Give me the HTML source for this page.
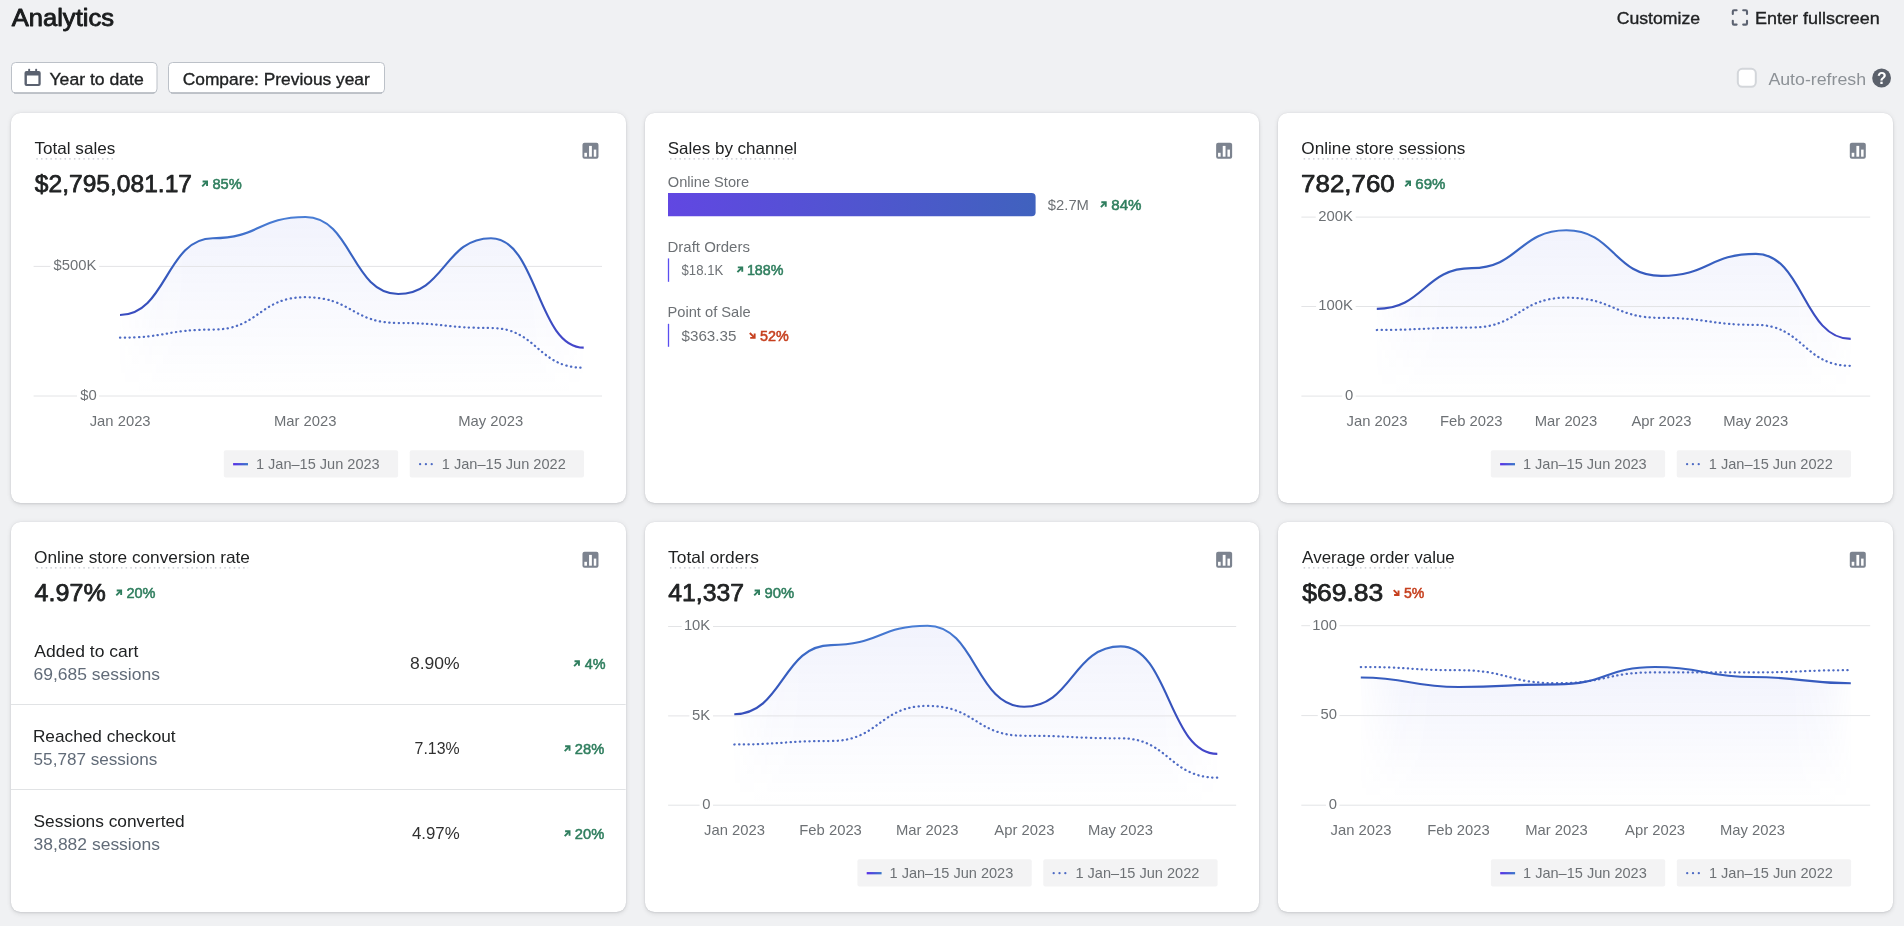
<!DOCTYPE html>
<html><head><meta charset="utf-8"><title>Analytics</title>
<style>
html,body{margin:0;padding:0;}
body{width:1904px;height:926px;overflow:hidden;background:#f0f1f3;position:relative;font-family:"Liberation Sans", sans-serif;}
.card{position:absolute;background:#fff;border-radius:9.5px;box-shadow:0 0 1px rgba(31,33,36,0.10),0 0 5px rgba(31,33,36,0.07),0 1px 2px rgba(31,33,36,0.08),0 3px 5px rgba(31,33,36,0.05);}
</style></head><body>
<div class="card" style="left:11px;top:113px;width:614.67px;height:390px"></div><div class="card" style="left:644.67px;top:113px;width:614.67px;height:390px"></div><div class="card" style="left:1278.33px;top:113px;width:614.67px;height:390px"></div><div class="card" style="left:11px;top:522px;width:614.67px;height:390px"></div><div class="card" style="left:644.67px;top:522px;width:614.67px;height:390px"></div><div class="card" style="left:1278.33px;top:522px;width:614.67px;height:390px"></div>
<svg width="1904" height="926" viewBox="0 0 1904 926" style="position:absolute;left:0;top:0;will-change:transform" font-family='"Liberation Sans", sans-serif'><defs><linearGradient id="fg1" x1="0" y1="212" x2="0" y2="396" gradientUnits="userSpaceOnUse"><stop offset="0" stop-color="#5566e0" stop-opacity="0.08"/><stop offset="0.5" stop-color="#5566e0" stop-opacity="0.04"/><stop offset="1" stop-color="#5566e0" stop-opacity="0.0"/></linearGradient><linearGradient id="mg1" x1="120.0" y1="0" x2="583.7" y2="0" gradientUnits="userSpaceOnUse"><stop offset="0" stop-color="#fff" stop-opacity="0.15"/><stop offset="0.08" stop-color="#fff" stop-opacity="0.85"/><stop offset="0.15" stop-color="#fff" stop-opacity="1"/><stop offset="0.88" stop-color="#fff" stop-opacity="1"/><stop offset="0.95" stop-color="#fff" stop-opacity="0.7"/><stop offset="1" stop-color="#fff" stop-opacity="0.15"/></linearGradient><mask id="m1" maskUnits="userSpaceOnUse" x="115.0" y="202" width="473.70000000000005" height="204"><rect x="115.0" y="202" width="473.70000000000005" height="204" fill="url(#mg1)"/></mask><linearGradient id="lg1" x1="0" y1="215" x2="0" y2="396" gradientUnits="userSpaceOnUse"><stop offset="0" stop-color="#4a7fd6"/><stop offset="0.2" stop-color="#3864c2"/><stop offset="0.45" stop-color="#3551ba"/><stop offset="0.72" stop-color="#4446ca"/><stop offset="1" stop-color="#4a3fd0"/></linearGradient><linearGradient id="lgl1" x1="232.79999999999998" y1="0" x2="247.79999999999998" y2="0" gradientUnits="userSpaceOnUse"><stop offset="0" stop-color="#5a2ee8"/><stop offset="1" stop-color="#3b78c9"/></linearGradient><linearGradient id="fg2" x1="0" y1="225.3" x2="0" y2="396.1" gradientUnits="userSpaceOnUse"><stop offset="0" stop-color="#5566e0" stop-opacity="0.08"/><stop offset="0.5" stop-color="#5566e0" stop-opacity="0.04"/><stop offset="1" stop-color="#5566e0" stop-opacity="0.0"/></linearGradient><linearGradient id="mg2" x1="1376.8" y1="0" x2="1850.6999999999998" y2="0" gradientUnits="userSpaceOnUse"><stop offset="0" stop-color="#fff" stop-opacity="0.15"/><stop offset="0.08" stop-color="#fff" stop-opacity="0.85"/><stop offset="0.15" stop-color="#fff" stop-opacity="1"/><stop offset="0.88" stop-color="#fff" stop-opacity="1"/><stop offset="0.95" stop-color="#fff" stop-opacity="0.7"/><stop offset="1" stop-color="#fff" stop-opacity="0.15"/></linearGradient><mask id="m2" maskUnits="userSpaceOnUse" x="1371.8" y="215.3" width="483.89999999999986" height="190.8"><rect x="1371.8" y="215.3" width="483.89999999999986" height="190.8" fill="url(#mg2)"/></mask><linearGradient id="lg2" x1="0" y1="215.1" x2="0" y2="396.1" gradientUnits="userSpaceOnUse"><stop offset="0" stop-color="#4a7fd6"/><stop offset="0.2" stop-color="#3864c2"/><stop offset="0.45" stop-color="#3551ba"/><stop offset="0.72" stop-color="#4446ca"/><stop offset="1" stop-color="#4a3fd0"/></linearGradient><linearGradient id="lgl2" x1="1499.7999999999997" y1="0" x2="1514.7999999999997" y2="0" gradientUnits="userSpaceOnUse"><stop offset="0" stop-color="#5a2ee8"/><stop offset="1" stop-color="#3b78c9"/></linearGradient><linearGradient id="fg3" x1="0" y1="620.7" x2="0" y2="805.2" gradientUnits="userSpaceOnUse"><stop offset="0" stop-color="#5566e0" stop-opacity="0.08"/><stop offset="0.5" stop-color="#5566e0" stop-opacity="0.04"/><stop offset="1" stop-color="#5566e0" stop-opacity="0.0"/></linearGradient><linearGradient id="mg3" x1="734.3" y1="0" x2="1217.3" y2="0" gradientUnits="userSpaceOnUse"><stop offset="0" stop-color="#fff" stop-opacity="0.15"/><stop offset="0.08" stop-color="#fff" stop-opacity="0.85"/><stop offset="0.15" stop-color="#fff" stop-opacity="1"/><stop offset="0.88" stop-color="#fff" stop-opacity="1"/><stop offset="0.95" stop-color="#fff" stop-opacity="0.7"/><stop offset="1" stop-color="#fff" stop-opacity="0.15"/></linearGradient><mask id="m3" maskUnits="userSpaceOnUse" x="729.3" y="610.7" width="493.0" height="204.5"><rect x="729.3" y="610.7" width="493.0" height="204.5" fill="url(#mg3)"/></mask><linearGradient id="lg3" x1="0" y1="623.7" x2="0" y2="805.2" gradientUnits="userSpaceOnUse"><stop offset="0" stop-color="#4a7fd6"/><stop offset="0.2" stop-color="#3864c2"/><stop offset="0.45" stop-color="#3551ba"/><stop offset="0.72" stop-color="#4446ca"/><stop offset="1" stop-color="#4a3fd0"/></linearGradient><linearGradient id="lgl3" x1="866.3999999999999" y1="0" x2="881.3999999999999" y2="0" gradientUnits="userSpaceOnUse"><stop offset="0" stop-color="#5a2ee8"/><stop offset="1" stop-color="#3b78c9"/></linearGradient><linearGradient id="fg4" x1="0" y1="662" x2="0" y2="805.2" gradientUnits="userSpaceOnUse"><stop offset="0" stop-color="#5566e0" stop-opacity="0.08"/><stop offset="0.5" stop-color="#5566e0" stop-opacity="0.04"/><stop offset="1" stop-color="#5566e0" stop-opacity="0.0"/></linearGradient><linearGradient id="mg4" x1="1360.8" y1="0" x2="1850.8" y2="0" gradientUnits="userSpaceOnUse"><stop offset="0" stop-color="#fff" stop-opacity="0.15"/><stop offset="0.08" stop-color="#fff" stop-opacity="0.85"/><stop offset="0.15" stop-color="#fff" stop-opacity="1"/><stop offset="0.88" stop-color="#fff" stop-opacity="1"/><stop offset="0.95" stop-color="#fff" stop-opacity="0.7"/><stop offset="1" stop-color="#fff" stop-opacity="0.15"/></linearGradient><mask id="m4" maskUnits="userSpaceOnUse" x="1355.8" y="652" width="500.0" height="163.20000000000005"><rect x="1355.8" y="652" width="500.0" height="163.20000000000005" fill="url(#mg4)"/></mask><linearGradient id="lg4" x1="0" y1="623.7" x2="0" y2="805.2" gradientUnits="userSpaceOnUse"><stop offset="0" stop-color="#4a7fd6"/><stop offset="0.2" stop-color="#3864c2"/><stop offset="0.45" stop-color="#3551ba"/><stop offset="0.72" stop-color="#4446ca"/><stop offset="1" stop-color="#4a3fd0"/></linearGradient><linearGradient id="lgl4" x1="1499.9" y1="0" x2="1514.9" y2="0" gradientUnits="userSpaceOnUse"><stop offset="0" stop-color="#5a2ee8"/><stop offset="1" stop-color="#3b78c9"/></linearGradient><linearGradient id="bar" x1="668" y1="0" x2="1036" y2="0" gradientUnits="userSpaceOnUse"><stop offset="0" stop-color="#6147e2"/><stop offset="1" stop-color="#4062be"/></linearGradient></defs>
<text x="11.80" y="25.70" font-size="23.0" fill="#1a1c1d" font-weight="400" textLength="102.13" lengthAdjust="spacingAndGlyphs" stroke="#1a1c1d" stroke-width="0.85" stroke-linejoin="round">Analytics</text>
<text x="1616.72" y="24.00" font-size="16.9" fill="#202223" font-weight="400" textLength="83.35" lengthAdjust="spacingAndGlyphs" stroke="#202223" stroke-width="0.35">Customize</text>
<g fill="none" stroke="#5b6270" stroke-width="2.1" stroke-linecap="round" stroke-linejoin="round"><path d="M1732.8,14 V11.4 Q1732.8,10.2 1734,10.2 H1736.6"/><path d="M1743.2,10.2 H1745.8 Q1747,10.2 1747,11.4 V14"/><path d="M1732.8,20.8 V23.4 Q1732.8,24.6 1734,24.6 H1736.6"/><path d="M1743.2,24.6 H1745.8 Q1747,24.6 1747,23.4 V20.8"/></g>
<text x="1755.06" y="24.00" font-size="16.9" fill="#202223" font-weight="400" textLength="124.76" lengthAdjust="spacingAndGlyphs" stroke="#202223" stroke-width="0.35">Enter fullscreen</text>
<rect x="11.5" y="62.5" width="145.5" height="30.5" rx="4" fill="#fff" stroke="#bcc1c8" stroke-width="1"/>
<path d="M14,93.0 H154.5" stroke="#a3a9b1" stroke-width="1"/>
<g fill="#5b6270"><path d="M26.5,71.1 H38.7 Q40.7,71.1 40.7,73.1 V84 Q40.7,86 38.7,86 H26.5 Q24.5,86 24.5,84 V73.1 Q24.5,71.1 26.5,71.1 Z M26.9,75.6 V83.9 H38.4 V75.6 Z" fill-rule="evenodd"/><rect x="28.2" y="68.8" width="1.9" height="3" rx="0.6"/><rect x="35.2" y="68.8" width="1.9" height="3" rx="0.6"/></g>
<text x="49.46" y="84.90" font-size="17.4" fill="#202223" font-weight="400" textLength="94.36" lengthAdjust="spacingAndGlyphs" stroke="#202223" stroke-width="0.35">Year to date</text>
<rect x="168.5" y="62.5" width="216" height="30.5" rx="4" fill="#fff" stroke="#bcc1c8" stroke-width="1"/>
<path d="M171,93.0 H382" stroke="#a3a9b1" stroke-width="1"/>
<text x="182.73" y="84.60" font-size="17.4" fill="#202223" font-weight="400" textLength="187.07" lengthAdjust="spacingAndGlyphs" stroke="#202223" stroke-width="0.35">Compare: Previous year</text>
<rect x="1737.8" y="68.8" width="18" height="18" rx="4.5" fill="#fff" stroke="#d3d6da" stroke-width="2"/>
<text x="1768.40" y="84.50" font-size="17.2" fill="#8c9196" font-weight="400" textLength="97.70" lengthAdjust="spacingAndGlyphs">Auto-refresh</text>
<circle cx="1881.6" cy="78" r="9.4" fill="#5b616b"/>
<text x="1881.8" y="83.8" font-size="15.8" font-weight="700" fill="#fff" text-anchor="middle">?</text>
<text x="34.46" y="154.20" font-size="16.5" fill="#202223" font-weight="400" textLength="80.84" lengthAdjust="spacingAndGlyphs">Total sales</text>
<path d="M36.3,158.9 H113.7" stroke="#c2c6ce" stroke-width="1.3" stroke-dasharray="1.5 3.2"/>
<g transform="translate(582.4699999999999,142.8)"><rect x="0" y="0" width="16" height="16" rx="2" fill="#7c838f"/><rect x="1.9" y="10" width="2.6" height="3.9" fill="#fff"/><rect x="6.6" y="3.1" width="2.8" height="10.8" fill="#fff"/><rect x="11.3" y="6.8" width="2.5" height="7.1" fill="#fff"/></g>
<text x="34.85" y="192.00" font-size="24.2" fill="#202223" font-weight="400" textLength="157.18" lengthAdjust="spacingAndGlyphs" stroke="#202223" stroke-width="0.75" stroke-linejoin="round">$2,795,081.17</text>
<g stroke="#2f7e5e" stroke-width="1.9" fill="none" stroke-linecap="butt" stroke-linejoin="miter"><path d="M202.2,186.3 L206.9,181.6"/><path d="M202.6,181.45 H207.05 V185.9"/></g>
<text x="212.44" y="188.80" font-size="14" fill="#2f7e5e" font-weight="400" textLength="29.29" lengthAdjust="spacingAndGlyphs" stroke="#2f7e5e" stroke-width="0.5">85%</text>
<text x="667.71" y="154.20" font-size="16.5" fill="#202223" font-weight="400" textLength="129.42" lengthAdjust="spacingAndGlyphs">Sales by channel</text>
<path d="M669.9699999999999,158.9 H795" stroke="#c2c6ce" stroke-width="1.3" stroke-dasharray="1.5 3.2"/>
<g transform="translate(1216.1399999999999,142.8)"><rect x="0" y="0" width="16" height="16" rx="2" fill="#7c838f"/><rect x="1.9" y="10" width="2.6" height="3.9" fill="#fff"/><rect x="6.6" y="3.1" width="2.8" height="10.8" fill="#fff"/><rect x="11.3" y="6.8" width="2.5" height="7.1" fill="#fff"/></g>
<text x="1301.36" y="154.20" font-size="16.5" fill="#202223" font-weight="400" textLength="164.05" lengthAdjust="spacingAndGlyphs">Online store sessions</text>
<path d="M1303.6299999999999,158.9 H1463.8" stroke="#c2c6ce" stroke-width="1.3" stroke-dasharray="1.5 3.2"/>
<g transform="translate(1849.8,142.8)"><rect x="0" y="0" width="16" height="16" rx="2" fill="#7c838f"/><rect x="1.9" y="10" width="2.6" height="3.9" fill="#fff"/><rect x="6.6" y="3.1" width="2.8" height="10.8" fill="#fff"/><rect x="11.3" y="6.8" width="2.5" height="7.1" fill="#fff"/></g>
<text x="1301.14" y="192.00" font-size="24.2" fill="#202223" font-weight="400" textLength="93.57" lengthAdjust="spacingAndGlyphs" stroke="#202223" stroke-width="0.75" stroke-linejoin="round">782,760</text>
<g stroke="#2f7e5e" stroke-width="1.9" fill="none" stroke-linecap="butt" stroke-linejoin="miter"><path d="M1405.1999999999998,186.3 L1409.9,181.6"/><path d="M1405.6,181.45 H1410.05 V185.9"/></g>
<text x="1415.35" y="188.80" font-size="14" fill="#2f7e5e" font-weight="400" textLength="30.10" lengthAdjust="spacingAndGlyphs" stroke="#2f7e5e" stroke-width="0.5">69%</text>
<text x="34.02" y="563.20" font-size="16.5" fill="#202223" font-weight="400" textLength="215.88" lengthAdjust="spacingAndGlyphs">Online store conversion rate</text>
<path d="M36.3,567.9 H248.1" stroke="#c2c6ce" stroke-width="1.3" stroke-dasharray="1.5 3.2"/>
<g transform="translate(582.4699999999999,551.8)"><rect x="0" y="0" width="16" height="16" rx="2" fill="#7c838f"/><rect x="1.9" y="10" width="2.6" height="3.9" fill="#fff"/><rect x="6.6" y="3.1" width="2.8" height="10.8" fill="#fff"/><rect x="11.3" y="6.8" width="2.5" height="7.1" fill="#fff"/></g>
<text x="34.60" y="601.00" font-size="24.2" fill="#202223" font-weight="400" textLength="71.19" lengthAdjust="spacingAndGlyphs" stroke="#202223" stroke-width="0.75" stroke-linejoin="round">4.97%</text>
<g stroke="#2f7e5e" stroke-width="1.9" fill="none" stroke-linecap="butt" stroke-linejoin="miter"><path d="M116.29999999999998,595.3 L121.0,590.6"/><path d="M116.69999999999999,590.45 H121.14999999999999 V594.9"/></g>
<text x="126.47" y="597.80" font-size="14" fill="#2f7e5e" font-weight="400" textLength="29.06" lengthAdjust="spacingAndGlyphs" stroke="#2f7e5e" stroke-width="0.5">20%</text>
<text x="668.12" y="563.20" font-size="16.5" fill="#202223" font-weight="400" textLength="90.78" lengthAdjust="spacingAndGlyphs">Total orders</text>
<path d="M669.9699999999999,567.9 H757.3" stroke="#c2c6ce" stroke-width="1.3" stroke-dasharray="1.5 3.2"/>
<g transform="translate(1216.1399999999999,551.8)"><rect x="0" y="0" width="16" height="16" rx="2" fill="#7c838f"/><rect x="1.9" y="10" width="2.6" height="3.9" fill="#fff"/><rect x="6.6" y="3.1" width="2.8" height="10.8" fill="#fff"/><rect x="11.3" y="6.8" width="2.5" height="7.1" fill="#fff"/></g>
<text x="668.27" y="601.00" font-size="24.2" fill="#202223" font-weight="400" textLength="75.73" lengthAdjust="spacingAndGlyphs" stroke="#202223" stroke-width="0.75" stroke-linejoin="round">41,337</text>
<g stroke="#2f7e5e" stroke-width="1.9" fill="none" stroke-linecap="butt" stroke-linejoin="miter"><path d="M754.2,595.3 L758.9,590.6"/><path d="M754.6,590.45 H759.05 V594.9"/></g>
<text x="764.43" y="597.80" font-size="14" fill="#2f7e5e" font-weight="400" textLength="29.71" lengthAdjust="spacingAndGlyphs" stroke="#2f7e5e" stroke-width="0.5">90%</text>
<text x="1302.13" y="563.20" font-size="16.5" fill="#202223" font-weight="400" textLength="152.68" lengthAdjust="spacingAndGlyphs">Average order value</text>
<path d="M1303.6299999999999,567.9 H1453" stroke="#c2c6ce" stroke-width="1.3" stroke-dasharray="1.5 3.2"/>
<g transform="translate(1849.8,551.8)"><rect x="0" y="0" width="16" height="16" rx="2" fill="#7c838f"/><rect x="1.9" y="10" width="2.6" height="3.9" fill="#fff"/><rect x="6.6" y="3.1" width="2.8" height="10.8" fill="#fff"/><rect x="11.3" y="6.8" width="2.5" height="7.1" fill="#fff"/></g>
<text x="1302.16" y="601.00" font-size="24.2" fill="#202223" font-weight="400" textLength="81.16" lengthAdjust="spacingAndGlyphs" stroke="#202223" stroke-width="0.75" stroke-linejoin="round">$69.83</text>
<g stroke="#c6401f" stroke-width="1.9" fill="none" stroke-linecap="butt" stroke-linejoin="miter"><path d="M1393.6999999999998,590.1 L1398.4,594.8"/><path d="M1394.1,594.9499999999999 H1398.55 V590.5"/></g>
<text x="1404.04" y="597.80" font-size="14" fill="#c6401f" font-weight="400" textLength="20.36" lengthAdjust="spacingAndGlyphs" stroke="#c6401f" stroke-width="0.5">5%</text>
<path d="M120.00,315.00 C166.37,315.00 166.37,238.20 212.74,238.20 C259.11,238.20 259.11,217.00 305.48,217.00 C351.85,217.00 351.85,294.00 398.22,294.00 C444.59,294.00 444.59,238.20 490.96,238.20 C537.33,238.20 537.33,347.60 583.70,347.60 L583.70,396 L120.00,396 Z" fill="url(#fg1)" mask="url(#m1)"/>
<path d="M33.6,266.4 H50.32399999999999" stroke="#e3e4e6" stroke-width="1"/>
<path d="M99.1,266.4 H602" stroke="#e3e4e6" stroke-width="1"/>
<text x="53.48" y="270.20" font-size="14.8" fill="#6d7175" font-weight="400" text-anchor="start">$500K</text>
<path d="M33.6,396 H77.038" stroke="#e3e4e6" stroke-width="1"/>
<path d="M99.1,396 H602" stroke="#e3e4e6" stroke-width="1"/>
<text x="80.19" y="399.80" font-size="14.8" fill="#6d7175" font-weight="400" text-anchor="start">$0</text>
<path d="M120.00,337.70 C166.37,337.70 166.37,329.60 212.74,329.60 C259.11,329.60 259.11,297.20 305.48,297.20 C351.85,297.20 351.85,323.00 398.22,323.00 C444.59,323.00 444.59,328.00 490.96,328.00 C537.33,328.00 537.33,367.80 583.70,367.80" fill="none" stroke="#4e6bc4" stroke-width="2.25" stroke-linecap="round" stroke-dasharray="0.3 4.4"/>
<path d="M120.00,315.00 C166.37,315.00 166.37,238.20 212.74,238.20 C259.11,238.20 259.11,217.00 305.48,217.00 C351.85,217.00 351.85,294.00 398.22,294.00 C444.59,294.00 444.59,238.20 490.96,238.20 C537.33,238.20 537.33,347.60 583.70,347.60" fill="none" stroke="url(#lg1)" stroke-width="2.15" stroke-linecap="butt"/>
<text x="89.73" y="426.40" font-size="14.8" fill="#6d7175" font-weight="400" text-anchor="start">Jan 2023</text>
<text x="273.92" y="426.40" font-size="14.8" fill="#6d7175" font-weight="400" text-anchor="start">Mar 2023</text>
<text x="458.18" y="426.40" font-size="14.8" fill="#6d7175" font-weight="400" text-anchor="start">May 2023</text>
<rect x="223.80" y="450.2" width="174.30" height="27.4" rx="2" fill="#f3f3f4"/>
<path d="M233.10,464.2 H248.00" stroke="url(#lgl1)" stroke-width="2.3"/>
<text x="255.91" y="469.30" font-size="14.6" fill="#6d7175" font-weight="400" textLength="123.81" lengthAdjust="spacingAndGlyphs">1 Jan–15 Jun 2023</text>
<rect x="409.70" y="450.2" width="174.30" height="27.4" rx="2" fill="#f3f3f4"/>
<path d="M420.10,464.2 H432.70" stroke="#4e6bc4" stroke-width="2.3" stroke-linecap="round" stroke-dasharray="0.01 5.8"/>
<text x="441.81" y="469.30" font-size="14.6" fill="#6d7175" font-weight="400" textLength="123.96" lengthAdjust="spacingAndGlyphs">1 Jan–15 Jun 2022</text>
<path d="M1376.80,308.80 C1424.19,308.80 1424.19,268.10 1471.58,268.10 C1518.97,268.10 1518.97,230.30 1566.36,230.30 C1613.75,230.30 1613.75,275.90 1661.14,275.90 C1708.53,275.90 1708.53,253.90 1755.92,253.90 C1803.31,253.90 1803.31,338.90 1850.70,338.90 L1850.70,396.1 L1376.80,396.1 Z" fill="url(#fg2)" mask="url(#m2)"/>
<path d="M1301.4,217.1 H1315.73" stroke="#e3e4e6" stroke-width="1"/>
<path d="M1355.7,217.1 H1870.2" stroke="#e3e4e6" stroke-width="1"/>
<text x="1318.29" y="220.90" font-size="14.8" fill="#6d7175" font-weight="400" text-anchor="start">200K</text>
<path d="M1301.4,306.5 H1316.1000000000001" stroke="#e3e4e6" stroke-width="1"/>
<path d="M1355.7,306.5 H1870.2" stroke="#e3e4e6" stroke-width="1"/>
<text x="1318.29" y="310.30" font-size="14.8" fill="#6d7175" font-weight="400" text-anchor="start">100K</text>
<path d="M1301.4,396.1 H1342.296" stroke="#e3e4e6" stroke-width="1"/>
<path d="M1355.7,396.1 H1870.2" stroke="#e3e4e6" stroke-width="1"/>
<text x="1345.00" y="399.90" font-size="14.8" fill="#6d7175" font-weight="400" text-anchor="start">0</text>
<path d="M1376.80,330.00 C1424.19,330.00 1424.19,327.50 1471.58,327.50 C1518.97,327.50 1518.97,297.70 1566.36,297.70 C1613.75,297.70 1613.75,317.90 1661.14,317.90 C1708.53,317.90 1708.53,324.90 1755.92,324.90 C1803.31,324.90 1803.31,365.80 1850.70,365.80" fill="none" stroke="#4e6bc4" stroke-width="2.25" stroke-linecap="round" stroke-dasharray="0.3 4.4"/>
<path d="M1376.80,308.80 C1424.19,308.80 1424.19,268.10 1471.58,268.10 C1518.97,268.10 1518.97,230.30 1566.36,230.30 C1613.75,230.30 1613.75,275.90 1661.14,275.90 C1708.53,275.90 1708.53,253.90 1755.92,253.90 C1803.31,253.90 1803.31,338.90 1850.70,338.90" fill="none" stroke="url(#lg2)" stroke-width="2.15" stroke-linecap="butt"/>
<text x="1346.53" y="426.40" font-size="14.8" fill="#6d7175" font-weight="400" text-anchor="start">Jan 2023</text>
<text x="1440.02" y="426.40" font-size="14.8" fill="#6d7175" font-weight="400" text-anchor="start">Feb 2023</text>
<text x="1534.80" y="426.40" font-size="14.8" fill="#6d7175" font-weight="400" text-anchor="start">Mar 2023</text>
<text x="1631.39" y="426.40" font-size="14.8" fill="#6d7175" font-weight="400" text-anchor="start">Apr 2023</text>
<text x="1723.14" y="426.40" font-size="14.8" fill="#6d7175" font-weight="400" text-anchor="start">May 2023</text>
<rect x="1490.80" y="450.2" width="174.30" height="27.4" rx="2" fill="#f3f3f4"/>
<path d="M1500.10,464.2 H1515.00" stroke="url(#lgl2)" stroke-width="2.3"/>
<text x="1522.91" y="469.30" font-size="14.6" fill="#6d7175" font-weight="400" textLength="123.81" lengthAdjust="spacingAndGlyphs">1 Jan–15 Jun 2023</text>
<rect x="1676.70" y="450.2" width="174.30" height="27.4" rx="2" fill="#f3f3f4"/>
<path d="M1687.10,464.2 H1699.70" stroke="#4e6bc4" stroke-width="2.3" stroke-linecap="round" stroke-dasharray="0.01 5.8"/>
<text x="1708.81" y="469.30" font-size="14.6" fill="#6d7175" font-weight="400" textLength="123.96" lengthAdjust="spacingAndGlyphs">1 Jan–15 Jun 2022</text>
<path d="M734.30,714.20 C782.60,714.20 782.60,645.10 830.90,645.10 C879.20,645.10 879.20,625.70 927.50,625.70 C975.80,625.70 975.80,706.70 1024.10,706.70 C1072.40,706.70 1072.40,646.40 1120.70,646.40 C1169.00,646.40 1169.00,753.90 1217.30,753.90 L1217.30,805.2 L734.30,805.2 Z" fill="url(#fg3)" mask="url(#m3)"/>
<path d="M668.1,626.5 H681.6880000000001" stroke="#e3e4e6" stroke-width="1"/>
<path d="M713,626.5 H1236.2" stroke="#e3e4e6" stroke-width="1"/>
<text x="683.88" y="630.30" font-size="14.8" fill="#6d7175" font-weight="400" text-anchor="start">10K</text>
<path d="M668.1,715.9 H689.384" stroke="#e3e4e6" stroke-width="1"/>
<path d="M713,715.9 H1236.2" stroke="#e3e4e6" stroke-width="1"/>
<text x="692.09" y="719.70" font-size="14.8" fill="#6d7175" font-weight="400" text-anchor="start">5K</text>
<path d="M668.1,805.2 H699.596" stroke="#e3e4e6" stroke-width="1"/>
<path d="M713,805.2 H1236.2" stroke="#e3e4e6" stroke-width="1"/>
<text x="702.30" y="809.00" font-size="14.8" fill="#6d7175" font-weight="400" text-anchor="start">0</text>
<path d="M734.30,744.50 C782.60,744.50 782.60,741.00 830.90,741.00 C879.20,741.00 879.20,705.90 927.50,705.90 C975.80,705.90 975.80,735.80 1024.10,735.80 C1072.40,735.80 1072.40,738.30 1120.70,738.30 C1169.00,738.30 1169.00,777.70 1217.30,777.70" fill="none" stroke="#4e6bc4" stroke-width="2.25" stroke-linecap="round" stroke-dasharray="0.3 4.4"/>
<path d="M734.30,714.20 C782.60,714.20 782.60,645.10 830.90,645.10 C879.20,645.10 879.20,625.70 927.50,625.70 C975.80,625.70 975.80,706.70 1024.10,706.70 C1072.40,706.70 1072.40,646.40 1120.70,646.40 C1169.00,646.40 1169.00,753.90 1217.30,753.90" fill="none" stroke="url(#lg3)" stroke-width="2.15" stroke-linecap="butt"/>
<text x="704.03" y="834.80" font-size="14.8" fill="#6d7175" font-weight="400" text-anchor="start">Jan 2023</text>
<text x="799.34" y="834.80" font-size="14.8" fill="#6d7175" font-weight="400" text-anchor="start">Feb 2023</text>
<text x="895.94" y="834.80" font-size="14.8" fill="#6d7175" font-weight="400" text-anchor="start">Mar 2023</text>
<text x="994.35" y="834.80" font-size="14.8" fill="#6d7175" font-weight="400" text-anchor="start">Apr 2023</text>
<text x="1087.92" y="834.80" font-size="14.8" fill="#6d7175" font-weight="400" text-anchor="start">May 2023</text>
<rect x="857.40" y="859.2" width="174.30" height="27.4" rx="2" fill="#f3f3f4"/>
<path d="M866.70,873.2 H881.60" stroke="url(#lgl3)" stroke-width="2.3"/>
<text x="889.51" y="878.30" font-size="14.6" fill="#6d7175" font-weight="400" textLength="123.81" lengthAdjust="spacingAndGlyphs">1 Jan–15 Jun 2023</text>
<rect x="1043.30" y="859.2" width="174.30" height="27.4" rx="2" fill="#f3f3f4"/>
<path d="M1053.70,873.2 H1066.30" stroke="#4e6bc4" stroke-width="2.3" stroke-linecap="round" stroke-dasharray="0.01 5.8"/>
<text x="1075.41" y="878.30" font-size="14.6" fill="#6d7175" font-weight="400" textLength="123.96" lengthAdjust="spacingAndGlyphs">1 Jan–15 Jun 2022</text>
<path d="M1360.80,677.50 C1409.80,677.50 1409.80,687.00 1458.80,687.00 C1507.80,687.00 1507.80,684.30 1556.80,684.30 C1605.80,684.30 1605.80,667.00 1654.80,667.00 C1703.80,667.00 1703.80,677.00 1752.80,677.00 C1801.80,677.00 1801.80,683.20 1850.80,683.20 L1850.80,805.2 L1360.80,805.2 Z" fill="url(#fg4)" mask="url(#m4)"/>
<path d="M1301.3,625.7 H1310.0860000000002" stroke="#e3e4e6" stroke-width="1"/>
<path d="M1339.4,625.7 H1870.2" stroke="#e3e4e6" stroke-width="1"/>
<text x="1312.28" y="629.50" font-size="14.8" fill="#6d7175" font-weight="400" text-anchor="start">100</text>
<path d="M1301.3,715.6 H1317.7820000000002" stroke="#e3e4e6" stroke-width="1"/>
<path d="M1339.4,715.6 H1870.2" stroke="#e3e4e6" stroke-width="1"/>
<text x="1320.49" y="719.40" font-size="14.8" fill="#6d7175" font-weight="400" text-anchor="start">50</text>
<path d="M1301.3,805.2 H1325.996" stroke="#e3e4e6" stroke-width="1"/>
<path d="M1339.4,805.2 H1870.2" stroke="#e3e4e6" stroke-width="1"/>
<text x="1328.70" y="809.00" font-size="14.8" fill="#6d7175" font-weight="400" text-anchor="start">0</text>
<path d="M1360.80,667.00 C1409.80,667.00 1409.80,670.20 1458.80,670.20 C1507.80,670.20 1507.80,683.20 1556.80,683.20 C1605.80,683.20 1605.80,672.40 1654.80,672.40 C1703.80,672.40 1703.80,672.40 1752.80,672.40 C1801.80,672.40 1801.80,670.20 1850.80,670.20" fill="none" stroke="#4e6bc4" stroke-width="2.25" stroke-linecap="round" stroke-dasharray="0.3 4.4"/>
<path d="M1360.80,677.50 C1409.80,677.50 1409.80,687.00 1458.80,687.00 C1507.80,687.00 1507.80,684.30 1556.80,684.30 C1605.80,684.30 1605.80,667.00 1654.80,667.00 C1703.80,667.00 1703.80,677.00 1752.80,677.00 C1801.80,677.00 1801.80,683.20 1850.80,683.20" fill="none" stroke="url(#lg4)" stroke-width="2.15" stroke-linecap="butt"/>
<text x="1330.53" y="834.80" font-size="14.8" fill="#6d7175" font-weight="400" text-anchor="start">Jan 2023</text>
<text x="1427.24" y="834.80" font-size="14.8" fill="#6d7175" font-weight="400" text-anchor="start">Feb 2023</text>
<text x="1525.24" y="834.80" font-size="14.8" fill="#6d7175" font-weight="400" text-anchor="start">Mar 2023</text>
<text x="1625.05" y="834.80" font-size="14.8" fill="#6d7175" font-weight="400" text-anchor="start">Apr 2023</text>
<text x="1720.02" y="834.80" font-size="14.8" fill="#6d7175" font-weight="400" text-anchor="start">May 2023</text>
<rect x="1490.90" y="859.2" width="174.30" height="27.4" rx="2" fill="#f3f3f4"/>
<path d="M1500.20,873.2 H1515.10" stroke="url(#lgl4)" stroke-width="2.3"/>
<text x="1523.01" y="878.30" font-size="14.6" fill="#6d7175" font-weight="400" textLength="123.81" lengthAdjust="spacingAndGlyphs">1 Jan–15 Jun 2023</text>
<rect x="1676.80" y="859.2" width="174.30" height="27.4" rx="2" fill="#f3f3f4"/>
<path d="M1687.20,873.2 H1699.80" stroke="#4e6bc4" stroke-width="2.3" stroke-linecap="round" stroke-dasharray="0.01 5.8"/>
<text x="1708.91" y="878.30" font-size="14.6" fill="#6d7175" font-weight="400" textLength="123.96" lengthAdjust="spacingAndGlyphs">1 Jan–15 Jun 2022</text>
<text x="667.84" y="186.50" font-size="14.6" fill="#6d7175" font-weight="400" textLength="81.20" lengthAdjust="spacingAndGlyphs">Online Store</text>
<path d="M668,193 H1031.6 Q1035.6,193 1035.6,197 V212.2 Q1035.6,216.2 1031.6,216.2 H668 Z" fill="url(#bar)"/>
<text x="1047.85" y="210.30" font-size="14.6" fill="#6d7175" font-weight="400" textLength="41.10" lengthAdjust="spacingAndGlyphs">$2.7M</text>
<g stroke="#2f7e5e" stroke-width="1.9" fill="none" stroke-linecap="butt" stroke-linejoin="miter"><path d="M1100.8999999999999,207.1 L1105.6000000000001,202.39999999999998"/><path d="M1101.3,202.24999999999997 H1105.75 V206.7"/></g>
<text x="1111.32" y="210.30" font-size="14" fill="#2f7e5e" font-weight="400" textLength="30.23" lengthAdjust="spacingAndGlyphs" stroke="#2f7e5e" stroke-width="0.5">84%</text>
<text x="667.50" y="251.80" font-size="14.6" fill="#6d7175" font-weight="400" textLength="82.44" lengthAdjust="spacingAndGlyphs">Draft Orders</text>
<path d="M668.5,258.4 V281.8" stroke="#5a4ef0" stroke-width="1.3"/>
<text x="681.57" y="275.00" font-size="14.6" fill="#6d7175" font-weight="400" textLength="41.66" lengthAdjust="spacingAndGlyphs">$18.1K</text>
<g stroke="#2f7e5e" stroke-width="1.9" fill="none" stroke-linecap="butt" stroke-linejoin="miter"><path d="M737.4,272.2 L742.0999999999999,267.50000000000006"/><path d="M737.8,267.35 H742.2499999999999 V271.8"/></g>
<text x="746.93" y="275.00" font-size="14" fill="#2f7e5e" font-weight="400" textLength="36.54" lengthAdjust="spacingAndGlyphs" stroke="#2f7e5e" stroke-width="0.5">188%</text>
<text x="667.53" y="317.30" font-size="14.6" fill="#6d7175" font-weight="400" textLength="83.14" lengthAdjust="spacingAndGlyphs">Point of Sale</text>
<path d="M668.5,323.8 V346.8" stroke="#5a4ef0" stroke-width="1.3"/>
<text x="681.55" y="340.80" font-size="14.6" fill="#6d7175" font-weight="400" textLength="54.86" lengthAdjust="spacingAndGlyphs">$363.35</text>
<g stroke="#c6401f" stroke-width="1.9" fill="none" stroke-linecap="butt" stroke-linejoin="miter"><path d="M749.8000000000001,333.00000000000006 L754.5,337.7"/><path d="M750.2,337.85 H754.65 V333.40000000000003"/></g>
<text x="760.03" y="340.80" font-size="14" fill="#c6401f" font-weight="400" textLength="28.70" lengthAdjust="spacingAndGlyphs" stroke="#c6401f" stroke-width="0.5">52%</text>
<text x="34.30" y="657.00" font-size="16.6" fill="#202223" font-weight="400" textLength="104.15" lengthAdjust="spacingAndGlyphs">Added to cart</text>
<text x="33.42" y="680.20" font-size="16.6" fill="#616b78" font-weight="400" textLength="126.53" lengthAdjust="spacingAndGlyphs">69,685 sessions</text>
<text x="410.01" y="668.70" font-size="16.8" fill="#303030" font-weight="400" textLength="49.71" lengthAdjust="spacingAndGlyphs">8.90%</text>
<text x="584.71" y="668.70" font-size="14.2" fill="#2f7e5e" font-weight="400" textLength="20.80" lengthAdjust="spacingAndGlyphs" stroke="#2f7e5e" stroke-width="0.5">4%</text>
<g stroke="#2f7e5e" stroke-width="1.9" fill="none" stroke-linecap="butt" stroke-linejoin="miter"><path d="M574.1,666.1 L578.8,661.4000000000001"/><path d="M574.5,661.2500000000001 H578.9499999999999 V665.7"/></g>
<path d="M11,704.5 H625.67" stroke="#e1e3e5" stroke-width="1.2"/>
<text x="32.92" y="742.00" font-size="16.6" fill="#202223" font-weight="400" textLength="142.72" lengthAdjust="spacingAndGlyphs">Reached checkout</text>
<text x="33.62" y="765.20" font-size="16.6" fill="#616b78" font-weight="400" textLength="123.62" lengthAdjust="spacingAndGlyphs">55,787 sessions</text>
<text x="414.61" y="753.70" font-size="16.8" fill="#303030" font-weight="400" textLength="45.06" lengthAdjust="spacingAndGlyphs">7.13%</text>
<text x="574.87" y="753.70" font-size="14.2" fill="#2f7e5e" font-weight="400" textLength="29.37" lengthAdjust="spacingAndGlyphs" stroke="#2f7e5e" stroke-width="0.5">28%</text>
<g stroke="#2f7e5e" stroke-width="1.9" fill="none" stroke-linecap="butt" stroke-linejoin="miter"><path d="M564.7,751.1 L569.4,746.4000000000001"/><path d="M565.1,746.2500000000001 H569.55 V750.7"/></g>
<path d="M11,789.5 H625.67" stroke="#e1e3e5" stroke-width="1.2"/>
<text x="33.52" y="827.00" font-size="16.6" fill="#202223" font-weight="400" textLength="151.25" lengthAdjust="spacingAndGlyphs">Sessions converted</text>
<text x="33.60" y="850.20" font-size="16.6" fill="#616b78" font-weight="400" textLength="126.35" lengthAdjust="spacingAndGlyphs">38,882 sessions</text>
<text x="411.96" y="838.70" font-size="16.8" fill="#303030" font-weight="400" textLength="47.73" lengthAdjust="spacingAndGlyphs">4.97%</text>
<text x="574.87" y="838.70" font-size="14.2" fill="#2f7e5e" font-weight="400" textLength="29.37" lengthAdjust="spacingAndGlyphs" stroke="#2f7e5e" stroke-width="0.5">20%</text>
<g stroke="#2f7e5e" stroke-width="1.9" fill="none" stroke-linecap="butt" stroke-linejoin="miter"><path d="M564.7,836.1 L569.4,831.4000000000001"/><path d="M565.1,831.2500000000001 H569.55 V835.7"/></g></svg>
</body></html>
